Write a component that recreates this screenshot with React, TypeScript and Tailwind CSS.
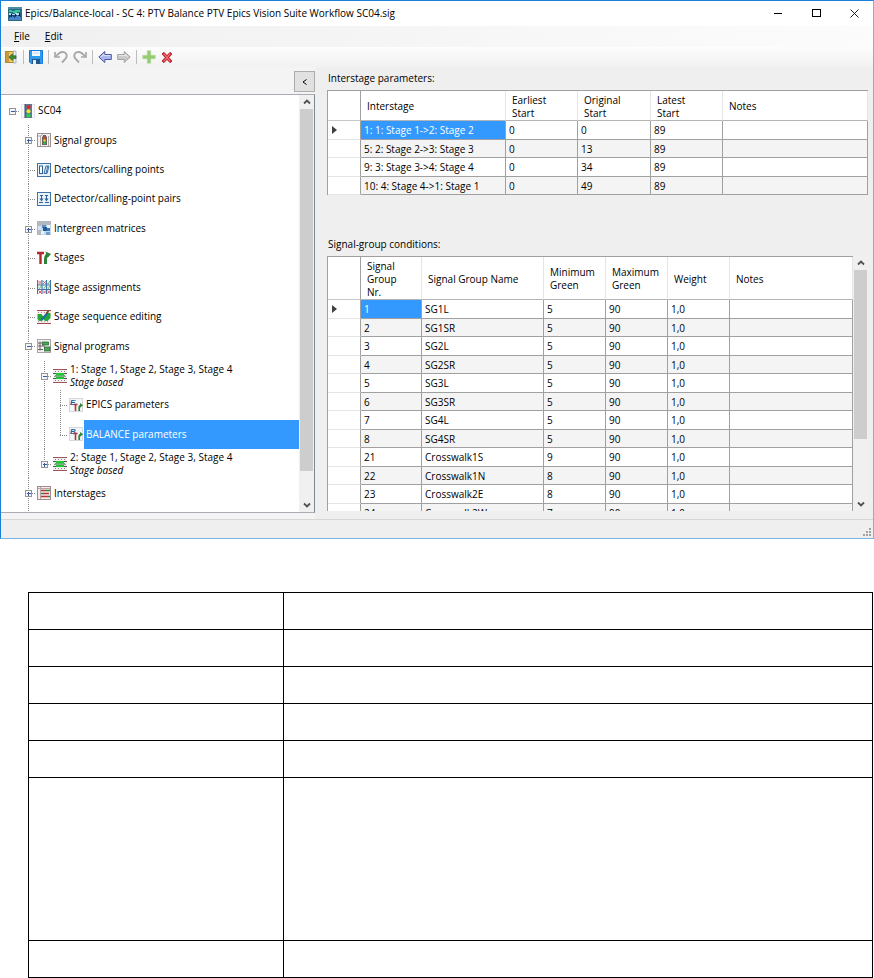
import React, { useState } from 'react';

type IconProps = { className?: string };

/* ---------- Toolbar and window icons ---------- */

const AppIcon = () => (
  <svg width="14" height="14" viewBox="0 0 14 14" shapeRendering="crispEdges">
    <rect width="14" height="14" fill="#2a6a86" />
    <path d="M0 0h14v2H0z" fill="#4d8ea6" />
    <path d="M1 3h3v1h3V3h5v2H9v1H5V5H1z" fill="#35c79a" />
    <path d="M1 6h2v1h4V6h5v2H1z" fill="#b4dbe6" />
    <rect x="1" y="8" width="12" height="5" fill="#174a80" />
    <path d="M1 11l3-2 2 2 3-3 4 2v3H1z" fill="#4a84c4" />
    <path d="M3.500 7v3M7.500 7v2M11.500 6v3" stroke="#0c2440" />
  </svg>
);

const ExitIcon = () => (
  <svg width="13" height="14" viewBox="0 0 13 14">
    <rect x="0.500" y="1.500" width="9" height="11" fill="#edc765" stroke="#b9862c" />
    <path d="M1 2h3v10H1z" fill="#c99a3e" />
    <path d="M8.500 1h2.500v12H8.500z" fill="#e9eef5" stroke="#8ba1bd" strokeWidth="0.700" />
    <path d="M3.800 7.200L7.500 3.800v2h3.500v2.800H7.500v2z" fill="#3f8a35" stroke="#235d20" strokeWidth="0.600" />
  </svg>
);

const SaveIcon = () => (
  <svg width="14" height="14" viewBox="0 0 14 14">
    <path d="M0.500 0.500h13v13H2L0.500 12z" fill="#2b9bf0" stroke="#1a7bdc" />
    <rect x="3" y="1" width="8" height="5" fill="#f2f8fd" />
    <path d="M4 3h6" stroke="#b9d6ee" />
    <rect x="3" y="9" width="8" height="5" fill="#24568c" />
    <rect x="4" y="10" width="3" height="4" fill="#e6eef5" />
  </svg>
);

const UndoIcon = ({ className }: IconProps) => (
  <svg width="14" height="14" viewBox="0 0 14 14" className={className}>
    <path d="M1 2v5h5" fill="none" stroke="#a8a8a8" strokeWidth="1.700" />
    <path d="M2 6.500C4.500 3 7.500 1.500 10 2.200C12.800 3.200 13.500 6 11.800 8.500L8 12.500" fill="none" stroke="#a8a8a8" strokeWidth="1.900" />
  </svg>
);

const ArrowIcon = ({ className, fill, stroke }: IconProps & { fill: string; stroke: string }) => (
  <svg width="14" height="14" viewBox="0 0 14 14" className={className}>
    <path d="M0.800 7l6-5.500v3h6.500v5H6.800v3z" fill={fill} stroke={stroke} />
    <path d="M3 7l2.800-2.600v1.200h6.500" fill="none" stroke="#fff" strokeOpacity="0.600" />
  </svg>
);

const AddIcon = () => (
  <svg width="14" height="14" viewBox="0 0 14 14">
    <path d="M5.300 0.800h3.400v4.500h4.500v3.400H8.700v4.500H5.300V8.700H0.800V5.300h4.500z" fill="#95cc72" stroke="#add99a" strokeWidth="0.600" />
  </svg>
);

const DeleteIcon = () => (
  <svg width="12" height="13" viewBox="0 0 12 13">
    <path d="M1 3l1.800-1.800L6 4.500l3.200-3.300L11 3 7.800 6.500 11 10l-1.800 1.800L6 8.500l-3.200 3.300L1 10l3.200-3.500z" fill="#dc3440" stroke="#b01822" strokeWidth="0.800" />
    <path d="M3 3l6 7M9 3L3 10" stroke="#ff9a9a" strokeWidth="0.700" />
  </svg>
);

/* ---------- Tree icons ---------- */

const TrafficLightIcon = () => (
  <svg width="14" height="14" viewBox="0 0 14 14">
    <rect x="0.500" y="0.500" width="13" height="13" fill="#f9f9fc" stroke="#e4e4ee" />
    <rect x="4" y="0" width="7" height="14" fill="#5d7a92" />
    <path d="M4 0v14" stroke="#2c4f78" />
    <circle cx="7.500" cy="3" r="2" fill="#ee2222" />
    <circle cx="7.500" cy="7.200" r="2" fill="#f2e42a" />
    <circle cx="7.500" cy="11.400" r="2" fill="#22d83a" />
  </svg>
);

const SignalGroupsIcon = () => (
  <svg width="14" height="14" viewBox="0 0 14 14">
    <rect x="0.500" y="0.500" width="13" height="13" fill="#f4f1ee" stroke="#9a9292" />
    <path d="M3.500 13V3M1 3h3l2-2M11.500 3v10" stroke="#b0a8a6" fill="none" />
    <path d="M5 12V4l1-1V2h3v1l1 1v8z" fill="#6a6262" />
    <circle cx="7.500" cy="5" r="1.200" fill="#ee3a2a" />
    <circle cx="7.500" cy="7.500" r="1.200" fill="#eedb2a" />
    <circle cx="7.500" cy="10" r="1.200" fill="#35c045" />
  </svg>
);

const DetectorsIcon = () => (
  <svg width="14" height="14" viewBox="0 0 14 14">
    <rect x="0.500" y="0.500" width="13" height="13" fill="#eaf2f9" stroke="#3f74a8" />
    <rect x="2.500" y="3" width="3" height="7.500" fill="#fff" stroke="#2d6298" />
    <path d="M7 10.500L9 3h3l-2 7.500zM9 10.500L10.800 3" fill="none" stroke="#2d6298" strokeWidth="0.900" />
  </svg>
);

const PairsIcon = () => (
  <svg width="14" height="14" viewBox="0 0 14 14">
    <rect x="0.500" y="0.500" width="13" height="13" fill="#eaf2f9" stroke="#3f74a8" />
    <path d="M3 3.500h3M8 3.500h3M4.500 3.500V8M9.500 3.500V8M2 10.500h4M8 10.500h4" fill="none" stroke="#2d6298" />
    <path d="M2.500 6.500h4l-2 3zM7.500 6.500h4l-2 3z" fill="#2d6298" />
  </svg>
);

const MatrixIcon = () => (
  <svg width="14" height="14" viewBox="0 0 14 14" shapeRendering="crispEdges">
    <rect width="14" height="14" fill="#c3d8ec" />
    <path d="M0 0h14v4H4v10H0z" fill="#b2b8c0" />
    <rect x="5" y="4" width="4" height="3" fill="#5c8fc4" />
    <rect x="6" y="6" width="4" height="4" fill="#1f5d9e" />
    <rect x="10" y="4" width="3" height="3" fill="#e9f2fa" />
    <rect x="1" y="5" width="3" height="4" fill="#d6e4f1" />
    <rect x="10" y="7" width="3" height="3" fill="#3f78b4" />
    <rect x="9" y="11" width="4" height="3" fill="#6d9dcb" />
    <rect x="4" y="10" width="3" height="3" fill="#e9f2fa" />
  </svg>
);

const StagesIcon = () => (
  <svg width="14" height="14" viewBox="0 0 14 14">
    <path d="M0 2h7M3.500 1v12" stroke="#b8262e" strokeWidth="2.400" fill="none" />
    <path d="M8.500 13V8c0-2.500 0.800-3.800 2.500-4.200" stroke="#2f8438" strokeWidth="3" fill="none" />
    <path d="M8.500 0.500L14 3 10.500 7z" fill="#2f8438" />
  </svg>
);

const AssignmentsIcon = () => (
  <svg width="14" height="14" viewBox="0 0 14 14">
    <rect width="14" height="14" fill="#f4f8fb" />
    <path d="M0.500 0v14M5 0v14M9.500 0v14M13.500 0v14M0 5h14M0 9.500h14" stroke="#3f74a8" strokeWidth="1.100" />
    <path d="M1.500 1l3 3M4.500 1l-3 3M6 1l3 3M9 1L6 4M1.500 10.500l3 3M4.500 10.500l-3 3M6 10.500l3 3M9 10.500l-3 3M10.500 10.500l2.500 3M13 10.500l-2.500 3" stroke="#d9575f" strokeWidth="0.900" />
    <path d="M10.300 3l1 1 1.700-3M1.500 7.500l1 1 2-3M6 7.500l1 1 2-3M10.300 7.500l1 1 1.700-3" stroke="#5ab068" strokeWidth="0.900" fill="none" />
  </svg>
);

const SequenceIcon = () => (
  <svg width="14" height="14" viewBox="0 0 14 14">
    <rect width="14" height="14" fill="#f7f0f0" />
    <path d="M0 0.500h14M0 13.500h14" stroke="#a14a50" />
    <path d="M1 2.500h12M1 11.700h12" stroke="#b98a8c" strokeDasharray="1 2" />
    <path d="M0.500 4h4l2 3 3-4h4v5l-3 3H8L6.500 9 4.500 11H2L0.500 9z" fill="#22a838" />
    <path d="M4.500 10L10 3.500" stroke="#2364a8" strokeWidth="2" />
    <path d="M9.500 3.500L11.500 1" stroke="#7a4420" strokeWidth="2" />
  </svg>
);

const ProgramsIcon = () => (
  <svg width="14" height="14" viewBox="0 0 14 14">
    <rect x="0.500" y="0.500" width="13" height="13" fill="#f3f1ef" stroke="#aba4a4" />
    <path d="M1 4h4M1 7h7M1 10.500h5M3 2.500v9" stroke="#6c6464" />
    <rect x="5.500" y="3" width="6" height="3" fill="#45ab58" stroke="#285c30" strokeWidth="0.700" />
    <rect x="7.500" y="8" width="5.500" height="4" fill="#45ab58" stroke="#285c30" strokeWidth="0.700" />
  </svg>
);

const StageBasedIcon = () => (
  <svg width="14" height="14" viewBox="0 0 14 14" shapeRendering="crispEdges">
    <rect width="14" height="14" fill="#f1efef" />
    <path d="M0 0.500h14M0 13.500h14" stroke="#a0525a" />
    <path d="M2 2.500h11M2 11.500h11" stroke="#8c8486" strokeDasharray="1 2" />
    <path d="M0 4.500h14M0 9.500h14" stroke="#4c5a50" />
    <path d="M1 7.500h12" stroke="#8aa48e" />
    <rect x="3" y="4" width="8" height="2" fill="#1dc832" />
    <rect x="3" y="8" width="8" height="2" fill="#1dc832" />
    <path d="M2 6h10v1H2z" fill="#56b866" />
  </svg>
);

// The small letter differs between the EPICS and the BALANCE entries
const ParameterIcon = ({ letter }: { letter: 'E' | 'B' }) => (
  <svg width="14" height="14" viewBox="0 0 14 14">
    <rect x="0.500" y="0.500" width="13" height="13" fill="#f3f5f8" stroke="#d3d8de" />
    <text x="1" y="7" fontSize="8" fontStyle="italic" fontWeight="bold" fontFamily="Liberation Sans, sans-serif" fill="#20639a">
      {letter}
    </text>
    <path d="M4.500 6.500h4M6.500 6v7" stroke="#b8323a" strokeWidth="1.600" />
    <path d="M10.200 13V9.500c0-1.300 0.400-2 1.800-2" stroke="#2f8438" strokeWidth="1.700" fill="none" />
    <path d="M11 5l3 2.300-3 2.400z" fill="#2f8438" />
  </svg>
);

const InterstagesIcon = () => (
  <svg width="14" height="14" viewBox="0 0 14 14">
    <rect x="0.500" y="0.500" width="13" height="13" fill="#f6eeee" stroke="#a08a8a" />
    <path d="M1 2.500h12M3.500 1v12" stroke="#b9a5a5" />
    <path d="M4 4.500h5M6 7.500h6M4 10.500h6" stroke="#b8323a" strokeWidth="1.300" />
    <path d="M9 4.500h4M4 7.500h2M10 10.500h3" stroke="#2f8438" strokeWidth="1.300" />
  </svg>
);

/* ---------- Tree ---------- */

type GuideKind = 'none' | 'full' | 'half';

interface TreeNode {
  id: string;
  label: string;
  note?: string;
  depth: number;
  // What the vertical guide does in each ancestor column and in the own one
  guides: GuideKind[];
  toggle?: 'plus' | 'minus';
  icon: React.ReactNode;
}

const nodes: TreeNode[] = [
  { id: 'sc04', label: 'SC04', depth: 0, guides: ['none'], toggle: 'minus', icon: <TrafficLightIcon /> },
  { id: 'groups', label: 'Signal groups', depth: 1, guides: ['none', 'full'], toggle: 'plus', icon: <SignalGroupsIcon /> },
  { id: 'detectors', label: 'Detectors/calling points', depth: 1, guides: ['none', 'full'], icon: <DetectorsIcon /> },
  { id: 'pairs', label: 'Detector/calling-point pairs', depth: 1, guides: ['none', 'full'], icon: <PairsIcon /> },
  { id: 'matrices', label: 'Intergreen matrices', depth: 1, guides: ['none', 'full'], toggle: 'plus', icon: <MatrixIcon /> },
  { id: 'stages', label: 'Stages', depth: 1, guides: ['none', 'full'], icon: <StagesIcon /> },
  { id: 'assignments', label: 'Stage assignments', depth: 1, guides: ['none', 'full'], icon: <AssignmentsIcon /> },
  { id: 'sequence', label: 'Stage sequence editing', depth: 1, guides: ['none', 'full'], icon: <SequenceIcon /> },
  { id: 'programs', label: 'Signal programs', depth: 1, guides: ['none', 'full'], toggle: 'minus', icon: <ProgramsIcon /> },
  { id: 'program1', label: '1: Stage 1, Stage 2, Stage 3, Stage 4', note: 'Stage based', depth: 2, guides: ['none', 'full', 'full'], toggle: 'minus', icon: <StageBasedIcon /> },
  { id: 'epics', label: 'EPICS parameters', depth: 3, guides: ['none', 'full', 'full', 'full'], icon: <ParameterIcon letter="E" /> },
  { id: 'balance', label: 'BALANCE parameters', depth: 3, guides: ['none', 'full', 'full', 'half'], icon: <ParameterIcon letter="B" /> },
  { id: 'program2', label: '2: Stage 1, Stage 2, Stage 3, Stage 4', note: 'Stage based', depth: 2, guides: ['none', 'full', 'half'], toggle: 'plus', icon: <StageBasedIcon /> },
  { id: 'interstages', label: 'Interstages', depth: 1, guides: ['none', 'full'], toggle: 'plus', icon: <InterstagesIcon /> },
];

interface GuideProps {
  guide: GuideKind;
  branch?: boolean;
  toggle?: 'plus' | 'minus';
}

const Guide = ({ guide, branch, toggle }: GuideProps) => (
  <svg className="w-4 h-full shrink-0" shapeRendering="crispEdges">
    {guide !== 'none' && (
      <line x1="8.5" y1="0" x2="8.5" y2={guide === 'full' ? '100%' : '50%'} stroke="#8a8a8a" strokeDasharray="1 1" />
    )}
    {branch && (
      <svg y="50%" overflow="visible">
        <line x1="8" y1="0.5" x2="16" y2="0.5" stroke="#8a8a8a" strokeDasharray="1 1" />
        {toggle && <rect x="5.500" y="-2.500" width="6" height="6" fill="#f6f6f6" stroke="#959595" />}
        {toggle && <line x1="7" y1="0.500" x2="11" y2="0.500" stroke="#3a5a9c" />}
        {toggle === 'plus' && <line x1="8.500" y1="-1" x2="8.500" y2="3" stroke="#3a5a9c" />}
      </svg>
    )}
  </svg>
);

const NavigationTree = () => {
  const [selected, setSelected] = useState('balance');

  return (
    <ul role="tree" aria-label="Signal controller" className="flex flex-1 flex-col min-w-0 pt-px">
      {nodes.map((node) => {
        const active = node.id === selected;
        return (
          <li
            key={node.id}
            role="treeitem"
            aria-selected={active}
            className="flex flex-1 items-center pl-[3px] min-h-0 cursor-default"
            onClick={() => setSelected(node.id)}
          >
            {node.guides.map((guide, i) => (
              <Guide key={i} guide={guide} branch={i === node.depth} toggle={i === node.depth ? node.toggle : undefined} />
            ))}
            <span className="shrink-0 ml-px">{node.icon}</span>
            <span
              className={`flex flex-col justify-center self-stretch pl-[2px] ml-px leading-[13px] whitespace-nowrap ${
                active ? 'flex-1 bg-[#3399ff] text-white' : ''
              }`}
            >
              {node.label}
              {node.note && <em>{node.note}</em>}
            </span>
          </li>
        );
      })}
      {/* The list goes on below the visible part */}
      <li role="presentation" className="flex h-1 pl-[3px]">
        <Guide guide="none" />
        <Guide guide="full" />
      </li>
    </ul>
  );
};

/* ---------- Scroll bar ---------- */

const Chevron = ({ down }: { down?: boolean }) => (
  <svg width="8" height="6" viewBox="0 0 8 6" className={down ? 'rotate-180' : ''}>
    <path d="M1 4.500l3-3 3 3" fill="none" stroke="#505050" strokeWidth="1.800" />
  </svg>
);

const ScrollBar = ({ thumb }: { thumb: string }) => (
  <div className="flex flex-col w-[15px] shrink-0 bg-[#f0f0f0] px-px">
    <button type="button" aria-label="Scroll up" className="flex h-[14px] items-center justify-center">
      <Chevron />
    </button>
    <div className="flex-1">
      <div className={`bg-[#cdcdcd] ${thumb}`}></div>
    </div>
    <button type="button" aria-label="Scroll down" className="flex h-[14px] items-center justify-center">
      <Chevron down />
    </button>
  </div>
);

/* ---------- Grids ---------- */

interface GridProps {
  label: string;
  columns: string[];
  widths: string[];
  rows: string[][];
  headClass: string;
}

const DataGrid = ({ label, columns, widths, rows, headClass }: GridProps) => (
  <table aria-label={label} className="w-full table-fixed border-separate border-spacing-0 border-l border-t border-[#a0a0a0] bg-white">
    <colgroup>
      <col className="w-[33px]" />
      {widths.map((w, i) => (
        <col key={i} className={w} />
      ))}
    </colgroup>
    <thead>
      <tr className={headClass}>
        <th className="border-r border-b border-r-[#a0a0a0] border-b-[#c8c8c8]"></th>
        {columns.map((c) => (
          <th key={c} className="border-r border-b border-r-[#e5e5e5] border-b-[#b4b4b4] pt-[2px] pl-[6px] text-left align-middle font-normal leading-[13px] whitespace-pre-line">
            {c}
          </th>
        ))}
      </tr>
    </thead>
    <tbody>
      {rows.map((row, r) => (
        <tr key={row[0]} className="h-[18px] odd:h-[19px] even:bg-[#f4f4f4]">
          <td className="border-r border-b border-r-[#a0a0a0] border-b-[#e5e5e5] bg-white p-0">
            {r === 0 && (
              <svg width="5" height="8" viewBox="0 0 5 8" className="ml-1">
                <path d="M0 0l5 4-5 4z" fill="#404040" />
              </svg>
            )}
          </td>
          {row.map((cell, c) => (
            <td
              key={c}
              className={`overflow-hidden border-r border-b border-[#a0a0a0] py-0 pr-0 pl-[3px] leading-[16px] whitespace-nowrap ${
                r === 0 && c === 0 ? 'bg-[#3399ff] text-white' : ''
              }`}
            >
              {cell}
            </td>
          ))}
        </tr>
      ))}
    </tbody>
  </table>
);

const interstages = [
  ['1: 1: Stage 1->2: Stage 2', '0', '0', '89', ''],
  ['5: 2: Stage 2->3: Stage 3', '0', '13', '89', ''],
  ['9: 3: Stage 3->4: Stage 4', '0', '34', '89', ''],
  ['10: 4: Stage 4->1: Stage 1', '0', '49', '89', ''],
];

const conditions = [
  ['1', 'SG1L', '5', '90', '1,0', ''],
  ['2', 'SG1SR', '5', '90', '1,0', ''],
  ['3', 'SG2L', '5', '90', '1,0', ''],
  ['4', 'SG2SR', '5', '90', '1,0', ''],
  ['5', 'SG3L', '5', '90', '1,0', ''],
  ['6', 'SG3SR', '5', '90', '1,0', ''],
  ['7', 'SG4L', '5', '90', '1,0', ''],
  ['8', 'SG4SR', '5', '90', '1,0', ''],
  ['21', 'Crosswalk1S', '9', '90', '1,0', ''],
  ['22', 'Crosswalk1N', '8', '90', '1,0', ''],
  ['23', 'Crosswalk2E', '8', '90', '1,0', ''],
  ['24', 'Crosswalk2W', '7', '90', '1,0', ''],
];

/* ---------- Window ---------- */

const ToolSeparator = () => <span className="h-[14px] w-px bg-[#bdbdbd]"></span>;

const TitleBar = () => (
  <header className="flex h-[25px] items-center bg-white pl-[7px]">
    <AppIcon />
    <h1 className="ml-[3px] flex-1 whitespace-nowrap">Epics/Balance-local - SC 4: PTV Balance PTV Epics Vision Suite Workflow SC04.sig</h1>
    <button type="button" aria-label="Minimize" className="flex w-[38px] justify-center">
      <svg width="9" height="9" shapeRendering="crispEdges"><path d="M0 4.500h8" stroke="#000" /></svg>
    </button>
    <button type="button" aria-label="Maximize" className="flex w-[38px] justify-center">
      <svg width="9" height="9" shapeRendering="crispEdges"><rect x="0.500" y="0.500" width="8" height="7" fill="none" stroke="#000" /></svg>
    </button>
    <button type="button" aria-label="Close" className="flex w-[38px] justify-center">
      <svg width="9" height="9"><path d="M0.500 0.500l8 8M8.500 0.500l-8 8" stroke="#222" /></svg>
    </button>
  </header>
);

const Toolbar = () => (
  <div role="toolbar" className="flex h-5 items-center gap-[5px] bg-linear-to-b from-[#fdfdfd] to-[#f1f1f1] pl-1">
    <button type="button" aria-label="Exit"><ExitIcon /></button>
    <ToolSeparator />
    <button type="button" aria-label="Save"><SaveIcon /></button>
    <ToolSeparator />
    <button type="button" aria-label="Undo"><UndoIcon /></button>
    <button type="button" aria-label="Redo"><UndoIcon className="-scale-x-100" /></button>
    <ToolSeparator />
    <button type="button" aria-label="Back"><ArrowIcon fill="#a9b6ec" stroke="#4a58a8" /></button>
    <button type="button" aria-label="Forward"><ArrowIcon className="-scale-x-100" fill="#c9c9c9" stroke="#a2a2a2" /></button>
    <ToolSeparator />
    <button type="button" aria-label="Add"><AddIcon /></button>
    <button type="button" aria-label="Delete"><DeleteIcon /></button>
  </div>
);

const SizeGrip = () => (
  <svg width="9" height="9" shapeRendering="crispEdges" fill="#a0a0a0">
    <rect x="6" y="0" width="2" height="2" />
    <rect x="3" y="3" width="2" height="2" />
    <rect x="6" y="3" width="2" height="2" />
    <rect x="0" y="6" width="2" height="2" />
    <rect x="3" y="6" width="2" height="2" />
    <rect x="6" y="6" width="2" height="2" />
  </svg>
);

const EditorWindow = () => (
  <section className="border border-t-[#1a7fd6] border-l-[#1a7fd6] border-r-[#7ab4e4] border-b-[#7ab4e4] bg-[#efefef]">
    <TitleBar />
    <nav className="flex h-[21px] items-center gap-[15px] bg-linear-to-r from-[#f0f0f0] to-[#fcfcfc] pl-[13px]">
      <button type="button"><u>F</u>ile</button>
      <button type="button"><u>E</u>dit</button>
    </nav>
    <Toolbar />

    <div className="flex h-[452px]">
      {/* Navigator */}
      <div className="flex w-[314px] shrink-0 flex-col bg-[#f4f4f4] pb-[6px]">
        <div className="flex justify-end pt-1 pb-[2px]">
          <button type="button" aria-label="Collapse navigator" className="flex h-[21px] w-[21px] items-center justify-center border border-[#adadad] bg-[#e1e1e1]">
            <svg width="5" height="6"><path d="M4.500 0.500L1 3l3.500 2.500" fill="none" stroke="#000" /></svg>
          </button>
        </div>
        <div className="flex min-h-0 flex-1 border border-l-0 border-[#a9acb3] border-r-[#7f8790] bg-white">
          <NavigationTree />
          <ScrollBar thumb="h-[362px]" />
        </div>
      </div>

      {/* Parameter tables */}
      <main className="flex min-w-0 flex-1 flex-col pt-[3px] pr-[5px] pb-2 pl-3">
        <h2 className="pl-px leading-[16px] pb-1">Interstage parameters:</h2>
        <DataGrid
          label="Interstage parameters"
          columns={['Interstage', 'Earliest\nStart', 'Original\nStart', 'Latest\nStart', 'Notes']}
          widths={['w-[145px]', 'w-[72px]', 'w-[73px]', 'w-[72px]', '']}
          rows={interstages}
          headClass="h-[30px]"
        />
        <h2 className="mt-[41px] pl-px leading-[16px] pb-1">Signal-group conditions:</h2>
        <div className="flex min-h-0 flex-1 overflow-hidden">
          <div className="min-w-0 flex-1 overflow-hidden">
            <DataGrid
              label="Signal-group conditions"
              columns={['Signal\nGroup\nNr.', 'Signal Group Name', 'Minimum\nGreen', 'Maximum\nGreen', 'Weight', 'Notes']}
              widths={['w-[61px]', 'w-[122px]', 'w-[62px]', 'w-[62px]', 'w-[62px]', '']}
              rows={conditions}
              headClass="h-[43px]"
            />
          </div>
          <ScrollBar thumb="h-[169px]" />
        </div>
      </main>
    </div>

    <footer className="flex h-[19px] items-end justify-end border-t border-[#d7d7d7] pr-px pb-px">
      <SizeGrip />
    </footer>
  </section>
);

/* ---------- Empty description table below the window ---------- */

const descriptionRows = ['h-[37px]', 'h-[37px]', 'h-[37px]', 'h-[37px]', 'h-[37px]', 'h-[163px]', 'h-[37px]'];

const App = () => (
  <div className="min-h-screen bg-white font-['Open_Sans',sans-serif] text-[10px] leading-[13px] text-black">
    <EditorWindow />
    <div className="mt-[53px] pl-7 pr-px">
      <table aria-label="Descriptions" className="w-full table-fixed border-collapse">
        <colgroup>
          <col className="w-[255px]" />
          <col />
        </colgroup>
        <tbody>
          {descriptionRows.map((height, i) => (
            <tr key={i} className={height}>
              <td className="border border-black"></td>
              <td className="border border-black"></td>
            </tr>
          ))}
        </tbody>
      </table>
    </div>
  </div>
);

export default App;
